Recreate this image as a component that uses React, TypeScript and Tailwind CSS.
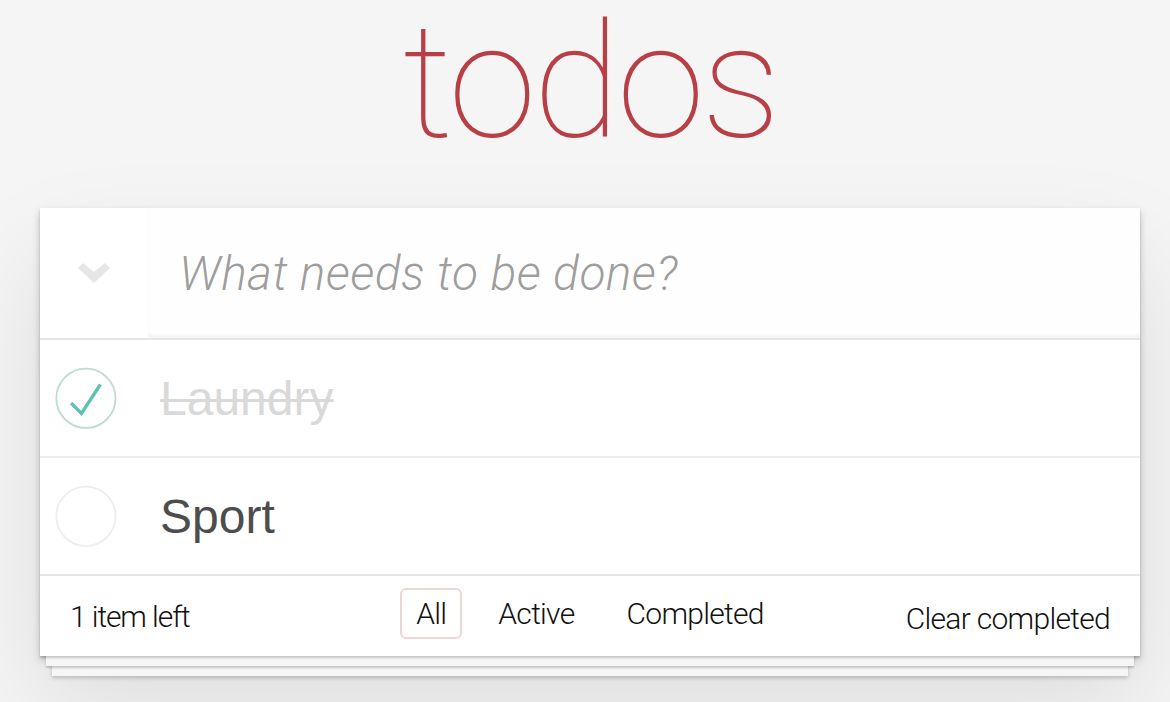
// TodoMVC look-alike, drawn at 2x

const todos = [
  { id: 1, title: 'Laundry', completed: true },
  { id: 2, title: 'Sport', completed: false },
];

const filters = ['All', 'Active', 'Completed'];

const ToggleCircle = ({ checked }: { checked: boolean }) => (
  <svg width="80" height="80" viewBox="-10 -18 100 135" className="shrink-0">
    <circle cx="50" cy="50" r="50" fill="none" stroke={checked ? '#bddad5' : '#ededed'} strokeWidth="3" />
    {checked && <path fill="#5dc2af" d="M72 25L42 71 27 56l-4 4 20 20 34-52z" />}
  </svg>
);

const Chevron = () => (
  <svg width="32" height="20" viewBox="0 0 32 20">
    <polygon points="0,5 5,0 16,9 27,0 32,5 16,20" fill="#e6e6e6" />
  </svg>
);

export default function App() {
  const left = todos.filter((t) => !t.completed).length;

  return (
    <div className="min-h-screen bg-[#f5f5f5] flex justify-center pl-[10px] font-['Roboto',sans-serif] text-[#111111]">
      <div className="w-[1100px]">
        <h1 className="h-[208px] pt-[2px] text-center text-[160px] leading-[160px] font-thin tracking-[-3.5px] text-[#b83f45]">
          todos
        </h1>

        <section className="bg-white shadow-[0_2px_2px_rgba(0,0,0,0.2),0_16px_0_-6px_#f6f6f6,0_18px_2px_-6px_rgba(0,0,0,0.2),0_32px_0_-12px_#f6f6f6,0_34px_4px_-12px_rgba(0,0,0,0.2),0_4px_8px_0_rgba(0,0,0,0.2),0_50px_100px_0_rgba(0,0,0,0.1)]">
          <header className="flex h-[130px]">
            <div className="w-[108px] shrink-0 flex items-center justify-center">
              <Chevron />
            </div>
            <input
              className="flex-1 min-w-0 h-full pl-[31px] pr-[32px] bg-[rgba(0,0,0,0.003)] shadow-[inset_0_-4px_2px_rgba(0,0,0,0.03)] outline-none text-[48px] tracking-[0.4px] text-[#4d4d4d] placeholder:italic placeholder:font-light placeholder:text-[rgba(0,0,0,0.4)]"
              placeholder="What needs to be done?"
            />
          </header>

          <ul className="border-t-2 border-[#e6e6e6]">
            {todos.map((todo, i) => (
              <li
                key={todo.id}
                className={`flex items-center ${
                  i < todos.length - 1 ? 'h-[118px] border-b-2 border-[#ededed]' : 'h-[116px]'
                }`}
              >
                <ToggleCircle checked={todo.completed} />
                <span
                  className={`ml-[40px] mt-[2px] text-[48px] leading-[58px] font-['Liberation_Sans',sans-serif] ${
                    todo.completed ? 'text-[#d9d9d9] line-through decoration-[3px]' : 'text-[#4d4d4d]'
                  }`}
                >
                  {todo.title}
                </span>
              </li>
            ))}
          </ul>

          <footer className="h-[82px] border-t-2 border-[#e6e6e6] px-[30px] grid grid-cols-[1fr_auto_1fr] items-center text-[30px] font-light tracking-[-0.7px]">
            <span className="justify-self-start tracking-[-1.1px]">
              {left} item{left === 1 ? '' : 's'} left
            </span>
            <ul className="flex gap-[20px] mb-[5px]">
              {filters.map((f) => (
                <li key={f}>
                  <a
                    className={`h-[51px] px-[14px] flex items-center rounded-[6px] border-2 ${
                      f === 'All' ? 'border-[rgba(175,47,47,0.2)]' : 'border-transparent'
                    }`}
                  >
                    {f}
                  </a>
                </li>
              ))}
            </ul>
            <button className="justify-self-end mt-[4px] font-light">Clear completed</button>
          </footer>
        </section>
      </div>
    </div>
  );
}
